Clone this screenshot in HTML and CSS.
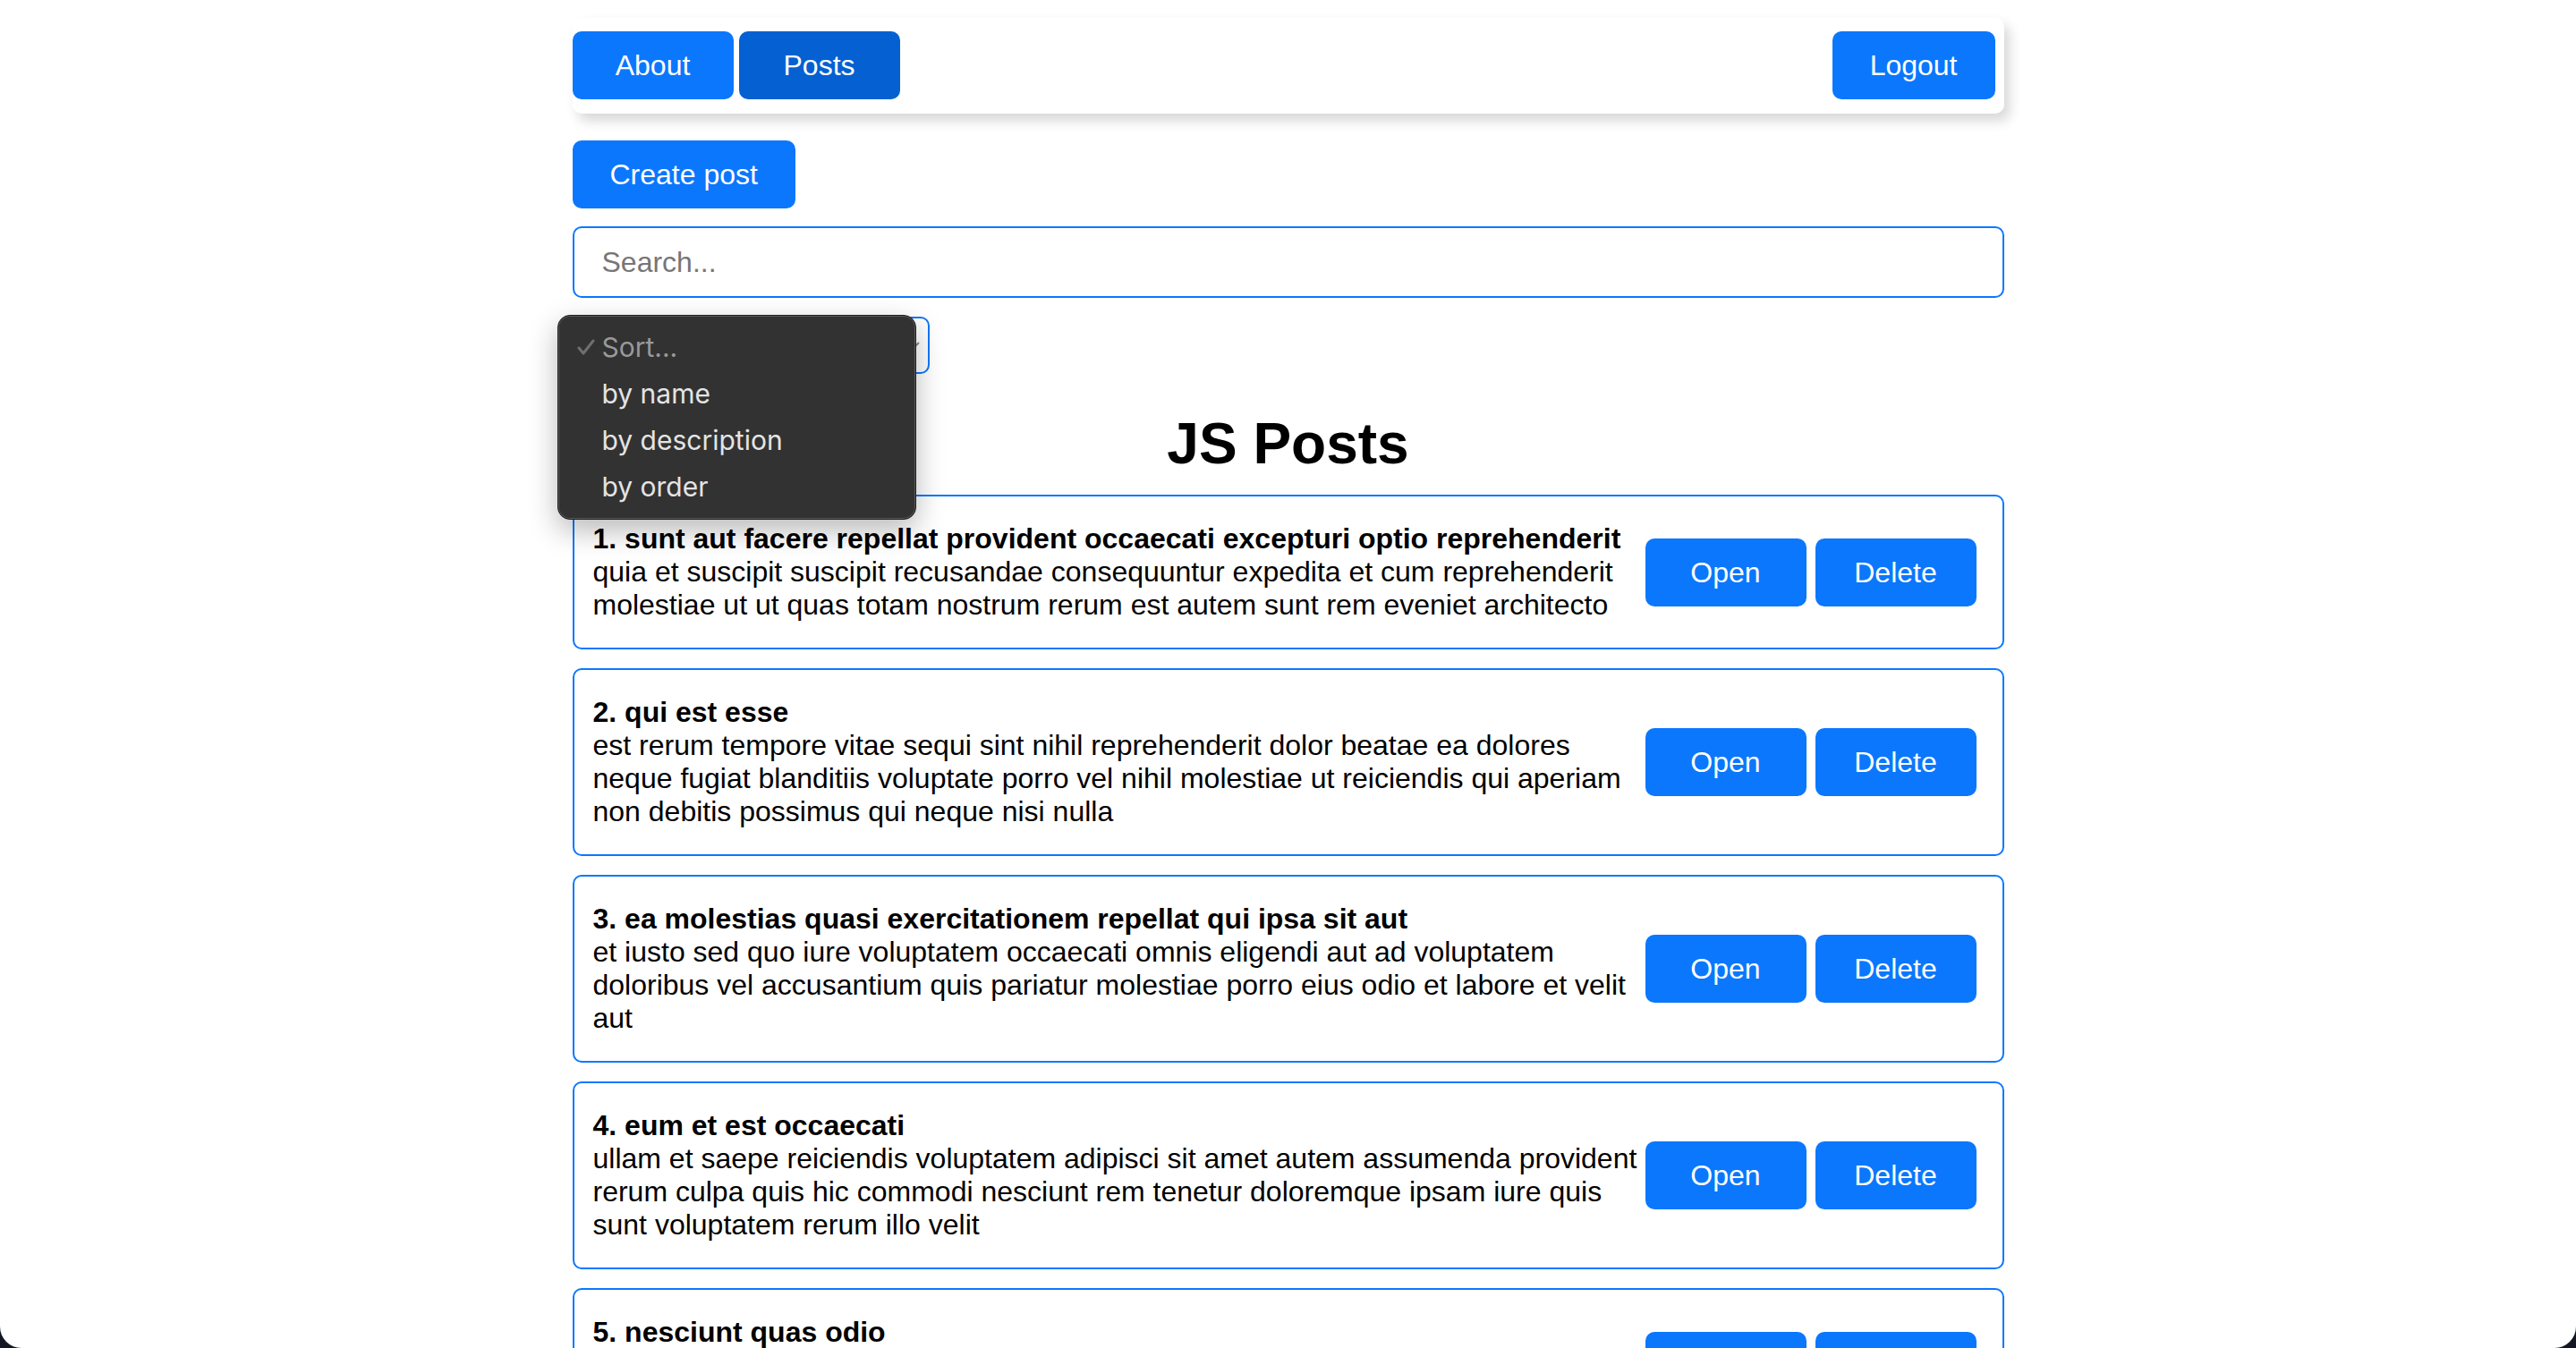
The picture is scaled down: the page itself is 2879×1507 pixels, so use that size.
FILE: index.html
```html
<!DOCTYPE html>
<html lang="en">
<head>
<meta charset="utf-8">
<title>JS Posts</title>
<link rel="stylesheet" href="styles.css">
</head>
<body>
<div class="window">
  <div class="app">
    <nav class="navbar">
      <div class="nav-links">
        <button class="btn">About</button>
        <button class="btn btn-active">Posts</button>
      </div>
      <button class="btn">Logout</button>
    </nav>

    <div class="create-row">
      <button class="btn">Create post</button>
    </div>

    <input class="search" type="text" placeholder="Search...">

    <div class="select-wrap">
      <div class="select">
        <span class="select-text">Sort...</span>
        <svg class="select-chevron" width="14" height="10" viewBox="0 0 14 10"><polyline points="2,2 7,7 12,2" fill="none" stroke="#8a8a8a" stroke-width="2"/></svg>
      </div>
      <div class="dropdown">
        <div class="dd-item dd-disabled">
          <svg class="dd-check" width="20" height="18" viewBox="0 0 20 18"><polyline points="2,10 7,16 18,2" fill="none" stroke="#6f6f6f" stroke-width="3" stroke-linecap="round" stroke-linejoin="round"/></svg>
          Sort...
        </div>
        <div class="dd-item">by name</div>
        <div class="dd-item">by description</div>
        <div class="dd-item">by order</div>
      </div>
    </div>

    <h1 class="page-title">JS Posts</h1>

    <div class="post">
      <div class="post-content">
        <strong>1. sunt aut facere repellat provident occaecati excepturi optio reprehenderit</strong>
        <div>quia et suscipit suscipit recusandae consequuntur expedita et cum reprehenderit molestiae ut ut quas totam nostrum rerum est autem sunt rem eveniet architecto</div>
      </div>
      <div class="post-btns">
        <button class="btn">Open</button>
        <button class="btn">Delete</button>
      </div>
    </div>

    <div class="post">
      <div class="post-content">
        <strong>2. qui est esse</strong>
        <div>est rerum tempore vitae sequi sint nihil reprehenderit dolor beatae ea dolores neque fugiat blanditiis voluptate porro vel nihil molestiae ut reiciendis qui aperiam non debitis possimus qui neque nisi nulla</div>
      </div>
      <div class="post-btns">
        <button class="btn">Open</button>
        <button class="btn">Delete</button>
      </div>
    </div>

    <div class="post">
      <div class="post-content">
        <strong>3. ea molestias quasi exercitationem repellat qui ipsa sit aut</strong>
        <div>et iusto sed quo iure voluptatem occaecati omnis eligendi aut ad voluptatem doloribus vel accusantium quis pariatur molestiae porro eius odio et labore et velit aut</div>
      </div>
      <div class="post-btns">
        <button class="btn">Open</button>
        <button class="btn">Delete</button>
      </div>
    </div>

    <div class="post">
      <div class="post-content">
        <strong>4. eum et est occaecati</strong>
        <div>ullam et saepe reiciendis voluptatem adipisci sit amet autem assumenda provident rerum culpa quis hic commodi nesciunt rem tenetur doloremque ipsam iure quis sunt voluptatem rerum illo velit</div>
      </div>
      <div class="post-btns">
        <button class="btn">Open</button>
        <button class="btn">Delete</button>
      </div>
    </div>

    <div class="post">
      <div class="post-content">
        <strong>5. nesciunt quas odio</strong>
        <div>repudiandae veniam quaerat sunt sed alias aut fugiat sit autem sed est voluptatem omnis possimus esse sequi odio dolorem</div>
      </div>
      <div class="post-btns">
        <button class="btn">Open</button>
        <button class="btn">Delete</button>
      </div>
    </div>
  </div>
</div>
</body>
</html>
```

FILE: styles.css
```css
* { box-sizing: border-box; }

html, body {
  margin: 0;
  padding: 0;
  height: 100%;
}

body {
  background: #141722;
  font-family: "Liberation Sans", Arial, Helvetica, sans-serif;
  font-size: 32px;
  color: #000;
  overflow: hidden;
}

.window {
  height: 1507px;
  background: #fff;
  border-bottom-left-radius: 24px;
  border-bottom-right-radius: 24px;
  overflow: hidden;
}

.app {
  width: 1600px;
  margin: 0 auto;
  padding-top: 20px;
}

.btn {
  font-family: "Liberation Sans", Arial, Helvetica, sans-serif;
  font-size: 32px;
  color: #fff;
  background: #0b77fd;
  border: none;
  border-radius: 10px;
  height: 76px;
  min-width: 180px;
  padding: 0 42px;
  line-height: 76px;
  cursor: pointer;
}

.btn-active {
  background: #0561d2;
}

.navbar {
  display: flex;
  justify-content: space-between;
  align-items: center;
  background: #fff;
  border-radius: 10px;
  padding: 15px 10px 16px 0;
  box-shadow: 6px 8px 14px rgba(0, 0, 0, 0.16);
}

.nav-links {
  display: flex;
  gap: 6px;
}

.create-row {
  margin-top: 30px;
}

.search {
  display: block;
  width: 100%;
  height: 80px;
  margin-top: 20px;
  border: 2px solid #0a78ff;
  border-radius: 10px;
  padding: 0 30px 0 31px;
  font-family: "Liberation Sans", Arial, Helvetica, sans-serif;
  font-size: 32px;
  color: #000;
  outline: none;
}

.search::placeholder {
  color: #767676;
}

.select-wrap {
  position: relative;
  width: 399px;
  margin-top: 21px;
}

.select {
  height: 64px;
  border: 2px solid #0a78ff;
  border-radius: 10px;
  display: flex;
  align-items: center;
  justify-content: space-between;
  padding: 0 8px 0 24px;
  font-size: 30px;
}

.select-text {
  visibility: hidden;
}

.select-chevron {
  display: block;
}

.dropdown {
  position: absolute;
  left: -17px;
  top: -2px;
  width: 401px;
  height: 229px;
  background: #323232;
  border: 1px solid #1c1c1c;
  border-radius: 14px;
  box-shadow: inset 0 0 0 1px #5a5a5a, 0 12px 32px rgba(0, 0, 0, 0.28);
  padding: 9px 0 10px;
  font-family: Inter, "Noto Sans", sans-serif;
  font-size: 30px;
  z-index: 5;
}

.dd-item {
  position: relative;
  height: 52px;
  line-height: 52px;
  padding-left: 49px;
  color: #e4e4e4;
}

.dd-disabled {
  color: #999;
}

.dd-check {
  position: absolute;
  left: 21px;
  top: 17px;
}

.page-title {
  margin: 41px 0 20px;
  text-align: center;
  font-size: 64px;
  font-weight: bold;
  line-height: normal;
}

.post {
  display: flex;
  align-items: center;
  border: 2px solid #0a78ff;
  border-radius: 10px;
  padding: 29px 20px 29px 21px;
  margin-bottom: 21px;
}

.post-content {
  flex: 1;
  min-width: 0;
  line-height: normal;
}

.post-content strong {
  display: block;
}

.post-btns {
  display: flex;
  gap: 10px;
  margin-right: 9px;
  flex-shrink: 0;
}
```
